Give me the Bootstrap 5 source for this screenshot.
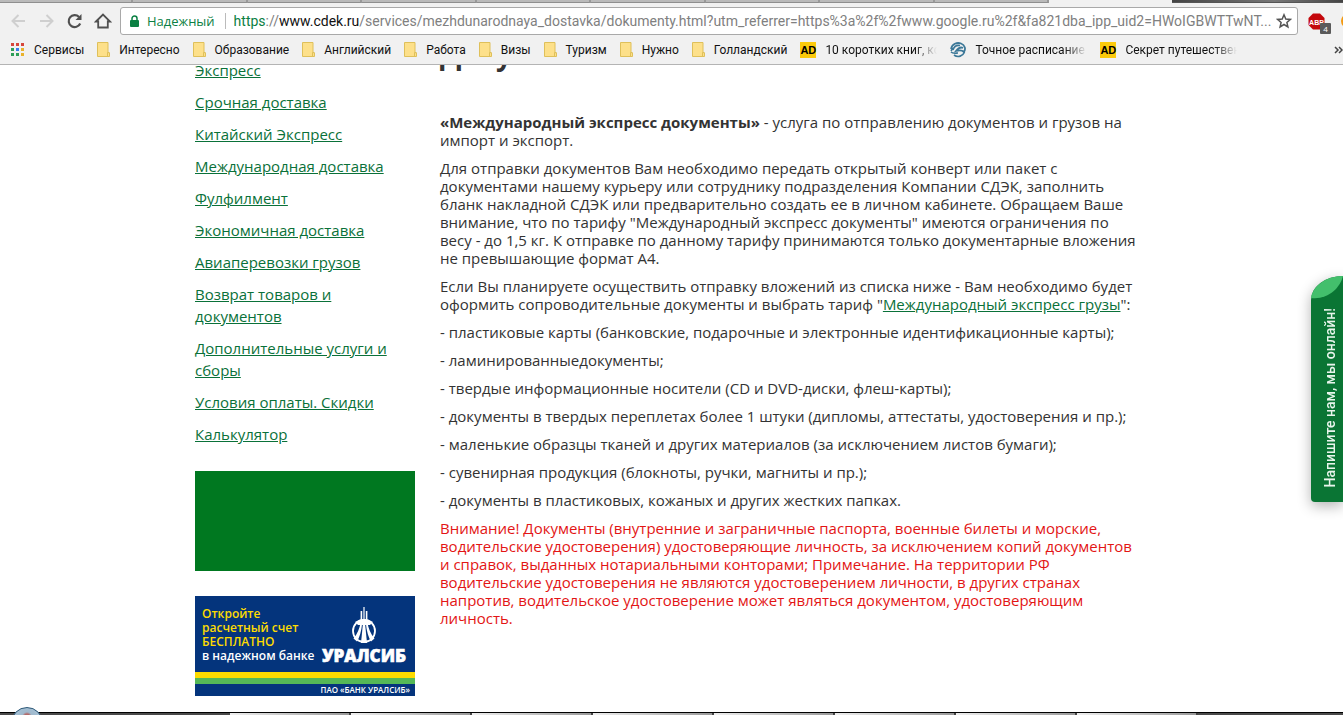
<!DOCTYPE html>
<html lang="ru">
<head>
<meta charset="utf-8">
<meta name="viewport" content="width=device-width, initial-scale=1">
<title>Документы</title>
<link href="https://cdn.jsdelivr.net/npm/bootstrap@5.3.0/dist/css/bootstrap.min.css" rel="stylesheet">
<style>
  body { font: 15px/18px "Open Sans", sans-serif; color: #333; background: #fff; }
  a { color: #0a7139; }
  .chrome { background: #f1f1f1; border-bottom: 1px solid #b4b4b4; font-family: "Open Sans", sans-serif; color: #111; }
  .tab-strip { height: 3px; }
  .bg-tab { flex: 115 1 0; background: #bababa; border-right: 2px solid #999; border-bottom: 1px solid #8f8f8f; }
  .bg-tab.wide { flex-grow: 134; }
  .open-tab { flex: 125 1 0; }
  .strip-rest { flex: 175 1 0; background: linear-gradient(90deg, #444, #777 60%, #444); border-bottom: 1px solid #555; }
  .tool-btn { border: 0; background: none; padding: 0; line-height: 0; color: #505050; }
  .tool-btn:disabled { color: #cfcfcf; }
  .toolbar { height: 36px; padding: 4px 0 4px 10px; }
  .nav-tools { gap: 10px; }
  .omnibox { height: 28px; background: #fff; border: 1px solid #a9a9a9; border-radius: 3px; padding: 0 5px 0 9px; }
  .omni-text { font: 14px/20px Roboto, sans-serif; color: #808080; }
  .omni-secure { color: #0b8043; font-size: 13px; line-height: 20px; }
  .omni-rule { width: 1px; height: 16px; background: #bbb; margin: 0 8px 0 10px; }
  .scheme { color: #0b8043; }
  .host { color: #111; }
  .extensions { width: 45px; padding-left: 10px; }
  .ext-count { right: -6px; bottom: -4px; width: 11px; height: 11px; background: #5a5a5a; color: #fff; font-size: 8px; line-height: 11px; border-radius: 1px; text-align: center; }
  .bookmarks { height: 25px; padding: 0 0 4px 11px; font: 12px/16px Roboto, sans-serif; }
  .bookmarks a { color: #111; }
  .bm { gap: 9px; margin-right: 13px; }
  .fade-label { width: 112px; overflow: hidden; -webkit-mask-image: linear-gradient(90deg, #000 80%, transparent); mask-image: linear-gradient(90deg, #000 80%, transparent); }
  .ad-mark { width: 16px; height: 16px; background: #fcca0c; color: #000; font: 700 11px/16px "Liberation Sans", sans-serif; text-align: center; }

  .viewport { overflow: hidden; }
  .page { max-width: 953px; margin-top: -28px; gap: 25px; }
  .side { width: 220px; padding-top: 22px; }
  .side-nav { line-height: 22px; margin-bottom: 26px; }
  .side-nav li { margin-bottom: 10px; }
  .promo { height: 100px; background: #007820; margin-bottom: 25px; }
  .bank { height: 100px; background: #04347c; color: #fff; }
  .bank:hover { color: #fff; }
  .bank-pitch { font: 600 12px/14px "Open Sans", sans-serif; padding: 11px 0 0 7px; height: 76px; }
  .bank-pitch em { color: #fddb00; font-style: normal; }
  .bank-logo { right: 6px; top: 10px; }
  .stripe-y { height: 6px; background: #fddb00; }
  .stripe-g { height: 6px; background: #55b857; }
  .bank-legal { font-size: 8px; line-height: 12px; font-weight: 600; padding-right: 5px; }
  .article { padding-right: 8px; }
  .article h1 { font-size: 28px; line-height: 34px; font-weight: 700; margin: 0 0 42px; }
  .article p { margin-bottom: 10px; }
  .alert-text { color: #e31515; }

  .chat-tab { right: 0; top: 276px; width: 32px; height: 226px; border: 0; padding: 0; background: #0a7534; color: #e8f5ec; border-radius: 32px 0 0 4px / 24px 0 0 4px; box-shadow: 0 4px 14px rgba(0,0,0,.3); }
  .chat-tab svg { left: 0; top: 0; }
  .chat-label { writing-mode: vertical-rl; transform: rotate(180deg); font: 500 14px/20px Roboto, sans-serif; margin: 32px 0 0 9px; }

  .taskbar { height: 3px; background: #4a4a4a; border-top: 1px solid #000; padding-right: 145px; padding-left: 230px; }
  .task { flex: 1 1 0; background: linear-gradient(90deg, #eee, #999); border-right: 2px solid #444; }
  .orb { left: 11px; bottom: -24px; width: 32px; height: 32px; border-radius: 50%; background: radial-gradient(circle at 50% 30%, #b26a6a 0 3px, #9fb9cd 5px, #a9c4d8 60%, #5b84a3); border: 1px solid #2c5878; }
</style>
</head>
<body>
<div class="d-flex flex-column vh-100 overflow-hidden position-relative">
  <header class="chrome flex-shrink-0">
    <div class="tab-strip d-flex">
      <div class="bg-tab wide"></div><div class="bg-tab"></div><div class="bg-tab"></div><div class="bg-tab"></div><div class="bg-tab"></div><div class="bg-tab"></div><div class="bg-tab"></div><div class="bg-tab"></div><div class="bg-tab"></div>
      <div class="open-tab"></div><div class="strip-rest"></div>
    </div>
    <div class="toolbar d-flex align-items-center">
      <div class="nav-tools d-flex align-items-center me-2">
        <button class="tool-btn" disabled aria-label="Назад"><svg width="18" height="18" viewBox="0 0 18 18" fill="none" stroke="currentColor" stroke-width="2"><path d="M15 9H2.500M8.500 3L2.500 9L8.500 15"/></svg></button>
        <button class="tool-btn" disabled aria-label="Вперёд"><svg width="18" height="18" viewBox="0 0 18 18" fill="none" stroke="currentColor" stroke-width="2"><path d="M2 9H14.500M8.500 3L14.500 9L8.500 15"/></svg></button>
        <button class="tool-btn" aria-label="Обновить"><svg width="18" height="18" viewBox="0 0 18 18"><path d="M14.200 11.500A6 6 0 1 1 13 4.900" fill="none" stroke="currentColor" stroke-width="2.200"/><path d="M15.500 2V8H9.500Z" fill="currentColor"/></svg></button>
        <button class="tool-btn" aria-label="Домой"><svg width="18" height="18" viewBox="0 0 18 18" fill="none" stroke="currentColor" stroke-width="1.800"><path d="M2 9.500L9 2.500L16 9.500H13.800V15.500H4.200V9.500Z"/></svg></button>
      </div>
      <div class="omnibox d-flex align-items-center flex-grow-1 overflow-hidden">
        <svg class="flex-shrink-0" width="9" height="12" viewBox="0 0 9 12"><rect y="5" width="9" height="7" rx="1" fill="#0b8043"/><path d="M2 5.500V3.500a2.500 2.500 0 0 1 5 0V5.500" fill="none" stroke="#0b8043" stroke-width="1.500"/></svg>
        <span class="omni-secure ms-2">Надежный</span>
        <span class="omni-rule flex-shrink-0"></span>
        <div class="omni-text flex-grow-1 text-nowrap overflow-hidden" role="textbox" contenteditable="true" spellcheck="false" aria-label="Адрес"><span class="scheme">https</span>://<span class="host">www.cdek.ru</span>/services/mezhdunarodnaya_dostavka/dokumenty.html?utm_referrer=https%3a%2f%2fwww.google.ru%2f&amp;fa821dba_ipp_uid2=HWoIGBWTTwNT...</div>
        <button class="tool-btn flex-shrink-0" aria-label="В закладки"><svg width="16" height="16" viewBox="0 0 16 16" fill="none" stroke="#555" stroke-width="1.500"><path d="M8 1.800L9.800 6L14.300 6.400L10.900 9.400L11.900 13.900L8 11.500L4.100 13.900L5.100 9.400L1.700 6.400L6.200 6Z"/></svg></button>
      </div>
      <div class="extensions d-flex flex-shrink-0 overflow-hidden align-items-center gap-3 py-2">
        <button class="tool-btn position-relative flex-shrink-0" aria-label="ABP"><svg width="17" height="17" viewBox="0 0 17 17"><path d="M5 0.500H12L16.500 5V12L12 16.500H5L0.500 12V5Z" fill="#c4080c"/><text x="8.500" y="11.500" text-anchor="middle" font-family="Liberation Sans" font-weight="700" font-size="7" fill="#fff">ABP</text></svg><span class="ext-count position-absolute">4</span></button>
        <button class="tool-btn flex-shrink-0" aria-label="Расширение"><svg width="14" height="14" viewBox="0 0 14 14"><circle cx="7" cy="7" r="7" fill="#f39a12"/></svg></button>
      </div>
    </div>
    <svg class="d-none"><defs>
      <symbol id="folder" viewBox="0 0 13 15"><path d="M.5 .5H11V10.500L12.500 11V14.500H.5Z" fill="#fde08a" stroke="#dfc05a"/><path d="M10.500 14V10.500H12.500" fill="none" stroke="#dfc05a"/></symbol>
    </defs></svg>
    <nav class="bookmarks d-flex align-items-center text-nowrap overflow-hidden" aria-label="Закладки">
      <a href="#" class="bm d-flex align-items-center text-decoration-none"><svg width="14" height="14" viewBox="0 0 14 14"><path d="M0 0h3v3H0zM5 0h3v3H5zM10 0h3v3h-3z" fill="#d6463b"/><path d="M0 5h3v3H0z" fill="#2f9e58"/><path d="M5 5h3v3H5z" fill="#3b7ded"/><path d="M10 5h3v3h-3zM10 10h3v3h-3z" fill="#e9b22c"/><path d="M0 10h3v3H0zM5 10h3v3H5z" fill="#2f9e58"/></svg>Сервисы</a>
      <a href="#" class="bm d-flex align-items-center text-decoration-none"><svg width="13" height="15"><use href="#folder"/></svg>Интересно</a>
      <a href="#" class="bm d-flex align-items-center text-decoration-none"><svg width="13" height="15"><use href="#folder"/></svg>Образование</a>
      <a href="#" class="bm d-flex align-items-center text-decoration-none"><svg width="13" height="15"><use href="#folder"/></svg>Английский</a>
      <a href="#" class="bm d-flex align-items-center text-decoration-none"><svg width="13" height="15"><use href="#folder"/></svg>Работа</a>
      <a href="#" class="bm d-flex align-items-center text-decoration-none"><svg width="13" height="15"><use href="#folder"/></svg>Визы</a>
      <a href="#" class="bm d-flex align-items-center text-decoration-none"><svg width="13" height="15"><use href="#folder"/></svg>Туризм</a>
      <a href="#" class="bm d-flex align-items-center text-decoration-none"><svg width="13" height="15"><use href="#folder"/></svg>Нужно</a>
      <a href="#" class="bm d-flex align-items-center text-decoration-none"><svg width="13" height="15"><use href="#folder"/></svg>Голландский</a>
      <a href="#" class="bm d-flex align-items-center text-decoration-none"><span class="ad-mark">AD</span><span class="fade-label">10 коротких книг, ко</span></a>
      <a href="#" class="bm d-flex align-items-center text-decoration-none"><svg width="16" height="16" viewBox="0 0 16 16" fill="none" stroke="#3c7898"><path d="M1 7C2 2 7 0 11 1.500C15 3 16 7 14 10C12 8 9 8 6 9C9 5 11 5 13 6" stroke-width="1.800"/><path d="M3 8C4 4.500 7 3 10 3.500M1 10C3 12 6 11 8 11M4 13C8 16 13 14 14.500 10M3 6L1 9" stroke-width="1.600"/></svg><span class="fade-label">Точное расписание а</span></a>
      <a href="#" class="bm d-flex align-items-center text-decoration-none"><span class="ad-mark">AD</span><span class="fade-label">Секрет путешественн</span></a>
      <button class="tool-btn ms-auto" aria-label="Ещё закладки"><svg width="9" height="8" viewBox="0 0 9 8" fill="none" stroke="#444" stroke-width="1.500"><path d="M1 1L4 4L1 7M5 1L8 4L5 7"/></svg></button>
    </nav>
  </header>

  <main class="viewport flex-grow-1">
    <div class="page d-flex mx-auto">
      <aside class="side flex-shrink-0">
        <ul class="side-nav list-unstyled">
          <li><a href="#">Экспресс</a></li>
          <li><a href="#">Срочная доставка</a></li>
          <li><a href="#">Китайский Экспресс</a></li>
          <li><a href="#">Международная доставка</a></li>
          <li><a href="#">Фулфилмент</a></li>
          <li><a href="#">Экономичная доставка</a></li>
          <li><a href="#">Авиаперевозки грузов</a></li>
          <li><a href="#">Возврат товаров и документов</a></li>
          <li><a href="#">Дополнительные услуги и сборы</a></li>
          <li><a href="#">Условия оплаты. Скидки</a></li>
          <li><a href="#">Калькулятор</a></li>
        </ul>
        <div class="promo"></div>
        <a href="#" class="bank d-block position-relative text-decoration-none">
          <div class="bank-pitch"><em>Откройте<br>расчетный счет<br>БЕСПЛАТНО</em><br>в надежном банке</div>
          <svg class="bank-logo position-absolute" width="88" height="58" viewBox="0 0 88 58" fill="#fff"><path d="M42.400 1H43.600V14H42.400ZM39.600 5H41.200V15H39.600ZM44.800 5H46.400V15H44.800Z"/><circle cx="43" cy="25" r="11" fill="none" stroke="#fff" stroke-width="1.800"/><path d="M34 16Q43 10 52 16L49 19H37Z"/><path d="M42 17H44L46 37H40Z"/><path d="M39.500 17H41.200Q40 29 36 35.500L32.500 32.500Q38 26 39.500 17ZM46.500 17H44.800Q46 29 50 35.500L53.500 32.500Q48 26 46.500 17Z"/><text x="43" y="56" text-anchor="middle" font-family="Open Sans" font-weight="800" font-size="17" stroke="#fff" stroke-width=".6">УРАЛСИБ</text></svg>
          <div class="stripe-y"></div><div class="stripe-g"></div>
          <div class="bank-legal text-end">ПАО «БАНК УРАЛСИБ»</div>
        </a>
      </aside>
      <article class="article flex-grow-1">
        <h1>Документы</h1>
        <p><strong>«Международный экспресс документы»</strong> - услуга по отправлению документов и грузов на импорт и экспорт.</p>
        <p>Для отправки документов Вам необходимо передать открытый конверт или пакет с документами нашему курьеру или сотруднику подразделения Компании СДЭК, заполнить бланк накладной СДЭК или предварительно создать ее в личном кабинете. Обращаем Ваше внимание, что по тарифу "Международный экспресс документы" имеются ограничения по весу - до 1,5 кг. К отправке по данному тарифу принимаются только документарные вложения не превышающие формат А4.</p>
        <p>Если Вы планируете осуществить отправку вложений из списка ниже - Вам необходимо будет оформить сопроводительные документы и выбрать тариф "<a href="#">Международный экспресс грузы</a>":</p>
        <p>- пластиковые карты (банковские, подарочные и электронные идентификационные карты);</p>
        <p>- ламинированныедокументы;</p>
        <p>- твердые информационные носители (CD и DVD-диски, флеш-карты);</p>
        <p>- документы в твердых переплетах более 1 штуки (дипломы, аттестаты, удостоверения и пр.);</p>
        <p>- маленькие образцы тканей и других материалов (за исключением листов бумаги);</p>
        <p>- сувенирная продукция (блокноты, ручки, магниты и пр.);</p>
        <p>- документы в пластиковых, кожаных и других жестких папках.</p>
        <p class="alert-text">Внимание! Документы (внутренние и заграничные паспорта, военные билеты и морские, водительские удостоверения) удостоверяющие личность, за исключением копий документов и справок, выданных нотариальными конторами; Примечание. На территории РФ водительские удостоверения не являются удостоверением личности, в других странах напротив, водительское удостоверение может являться документом, удостоверяющим личность.</p>
      </article>
    </div>
  </main>

  <button class="chat-tab position-fixed d-flex align-items-start">
    <svg class="position-absolute" width="32" height="24" viewBox="0 0 32 24"><path d="M0 22C2 9 16 0 32 0C29 12 17 24 0 22Z" fill="#43bf6c"/></svg>
    <span class="chat-label text-nowrap">Напишите нам, мы онлайн!</span>
  </button>

  <footer class="taskbar d-flex flex-shrink-0">
    <div class="task"></div><div class="task"></div><div class="task"></div><div class="task"></div><div class="task"></div><div class="task"></div><div class="task"></div><div class="task"></div>
  </footer>
  <div class="orb position-absolute"></div>
</div>
<script src="https://cdn.jsdelivr.net/npm/bootstrap@5.3.0/dist/js/bootstrap.bundle.min.js"></script>
</body>
</html>
